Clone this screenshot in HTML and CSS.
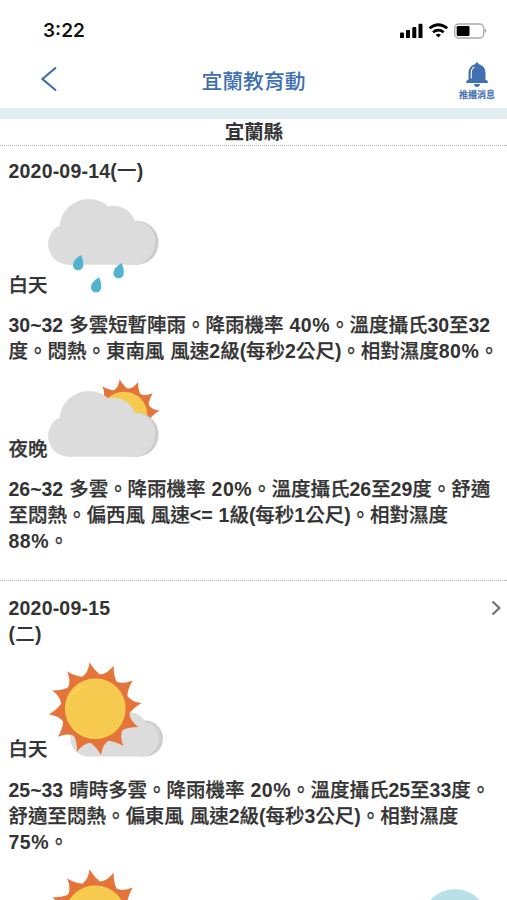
FILE: index.html
```html
<!DOCTYPE html>
<html lang="zh-TW">
<head>
<meta charset="utf-8">
<title>宜蘭教育動</title>
<link rel="stylesheet" href="styles.css">
</head>
<body>
<svg class="defs" aria-hidden="true">
  <defs>
    <symbol id="cloud" viewBox="0 0 112 68" overflow="visible">
      <circle cx="88.700" cy="44.700" r="22" fill="#cecece"/>
      <g fill="#dcdcdc">
        <circle cx="40.900" cy="30.300" r="29.400"/>
        <circle cx="65.500" cy="30.500" r="22.800"/>
        <circle cx="20.800" cy="46" r="20.700"/>
        <path d="M20.800 30H88v36.700H20.800z"/>
        <path d="M85 23H89Q106 26 107 43Q107 60 90 66.700H78z"/>
      </g>
    </symbol>
    <path id="ray" d="M-9 -33.300Q-2.500 -36.500 0 -46.700Q4 -37.500 9 -33.300z"/>
    <g id="sun">
      <g fill="#e4743a">
        <circle r="34.700"/>
        <use href="#ray" transform="rotate(-7)"/><use href="#ray" transform="rotate(23)"/>
        <use href="#ray" transform="rotate(53)"/><use href="#ray" transform="rotate(83)"/>
        <use href="#ray" transform="rotate(113)"/><use href="#ray" transform="rotate(143)"/>
        <use href="#ray" transform="rotate(173)"/><use href="#ray" transform="rotate(203)"/>
        <use href="#ray" transform="rotate(233)"/><use href="#ray" transform="rotate(263)"/>
        <use href="#ray" transform="rotate(293)"/><use href="#ray" transform="rotate(323)"/>
      </g>
      <circle r="30.300" fill="#fcd050"/>
      <path d="M-29 -8C-24 -30 10 -38 25 -17C34 -2 29 18 15 26C-6 36 -30 20 -29 1C-28 -12 -15 -23 0 -24C-15 -25 -25 -17 -29 -8z" fill="#f6c94f"/>
    </g>
    <symbol id="sunny" viewBox="0 0 116 96">
      <circle cx="97" cy="76.500" r="18" fill="#cecece"/>
      <g fill="#dcdcdc">
        <circle cx="80" cy="70" r="20"/>
        <circle cx="40" cy="77" r="17.500"/>
        <path d="M40 60H96Q111 62 111 77Q110 90 97 94.500H40z"/>
      </g>
      <use href="#sun" x="47.300" y="46.700"/>
    </symbol>
  </defs>
</svg>
<div class="screen">
  <header class="status">
    <span class="time">3:22</span>
    <svg class="indicators" viewBox="0 0 88 16" width="88" height="16">
      <path d="M0 10.500q0-1 1-1h2q1 0 1 1V15H0zM6 8q0-1 1-1h2q1 0 1 1v7H6zM12.300 5q0-1 1-1h2q1 0 1 1v10h-4zM18.500 2q0-1.200 1-1.200h2q1 0 1 1.200v13h-4z"/>
      <g fill="none" stroke="#000" stroke-width="2.700"><path d="M29.500 5.300Q38.300-1.800 47.200 5.300M33 9.200q5.300-4.300 10.700 0"/></g>
      <path d="M35.700 11.700q2.600-1.800 5.300 0l-2.650 2.900z"/>
      <rect x="54.700" y="1" width="29" height="14" rx="4" fill="#fff" stroke="#aaa" stroke-width="1.400"/>
      <rect x="56.700" y="3" width="12.800" height="10" rx="1.300"/>
      <path d="M84.800 5.500q3.500 2.300 0 4.600z" fill="#aaa"/>
    </svg>
  </header>
  <nav class="nav">
    <svg class="back" viewBox="0 0 16 26" width="16" height="26"><path d="M15 1.500L1.500 13 15 24.500" fill="none" stroke="#3f6fb0" stroke-width="2.200"/></svg>
    <h1>宜蘭教育動</h1>
    <div class="push">
      <svg viewBox="0 0 24 26" width="24" height="26">
        <path d="M10.500 2q0-1.800 1.500-1.800T13.500 2Q20.500 4 20.500 11v6.500l2.200 1.500q1 2-.7 2H2q-1.700 0-.7-2l2.200-1.500V11q0-7 7-9z" fill="#4170b2"/>
        <path d="M9 22h6q-.5 3-3 3t-3-3z" fill="#4170b2"/>
        <path d="M9.300 5Q6.300 6.500 6.300 11v5.500" fill="none" stroke="#fff" stroke-width="1.100"/>
      </svg>
      <span>推播消息</span>
    </div>
  </nav>
  <div class="band"></div>
  <h2>宜蘭縣</h2>
  <section class="day day-first">
    <h3><b>2020-09-14(</b>一<b>)</b></h3>
    <div class="period rain">
      <span>白天</span>
      <svg viewBox="0 0 116 96" width="116" height="96">
        <use href="#cloud" width="112" height="68"/>
        <g fill="#51b3d0">
          <path id="drop" d="M33.300 57Q35.500 63 35.300 67A5.200 5.200 0 0 1 24.900 67Q25.500 61 33.300 57z"/>
          <use href="#drop" x="40.500" y="8"/><use href="#drop" x="18" y="22.300"/>
        </g>
      </svg>
    </div>
    <p><b>30~32</b> 多雲短暫陣雨。降雨機率 <b class="pct">40%</b>。溫度攝氏<b>30</b>至<b>32</b><br>度。悶熱。東南風 風速<b>2</b>級<b>(</b>每秒<b>2</b>公尺<b>)</b>。相對濕度<b class="pct">80%</b>。</p>
    <div class="period cloudy">
      <span>夜晚</span>
      <svg viewBox="0 0 116 80" width="116" height="80">
        <use href="#sun" transform="translate(76 37) scale(.77)"/>
        <use href="#cloud" y="12" width="112" height="68"/>
      </svg>
    </div>
    <p><b>26~32</b> 多雲。降雨機率 <b class="pct">20%</b>。溫度攝氏<b>26</b>至<b>29</b>度。舒適<br>至悶熱。偏西風 風速<b>&lt;= 1</b>級<b>(</b>每秒<b>1</b>公尺<b>)</b>。相對濕度<br><b class="pct">88%</b>。</p>
  </section>
  <section class="day">
    <div class="day-head">
      <h3><b>2020-09-15</b><br><b>(</b>二<b>)</b></h3>
      <svg viewBox="0 0 10 16" width="10" height="16"><path d="M1.500 1.500L8.300 8l-6.800 6.500" fill="none" stroke="#777" stroke-width="2.400"/></svg>
    </div>
    <div class="period clear">
      <span>白天</span>
      <svg width="116" height="96"><use href="#sunny"/></svg>
    </div>
    <p><b>25~33</b> 晴時多雲。降雨機率 <b class="pct">20%</b>。溫度攝氏<b>25</b>至<b>33</b>度。<br>舒適至悶熱。偏東風 風速<b>2</b>級<b>(</b>每秒<b>3</b>公尺<b>)</b>。相對濕度<br><b class="pct">75%</b>。</p>
    <div class="period clear night">
      <span></span>
      <svg width="116" height="96"><use href="#sunny"/></svg>
    </div>
  </section>
  <div class="fab"></div>
</div>
</body>
</html>
```
FILE: styles.css
```css
* { box-sizing: border-box; margin: 0; padding: 0; }
body { background: #fff; overflow: hidden; }
.defs { position: absolute; width: 0; height: 0; }
.screen {
  position: relative;
  width: 507px;
  height: 900px;
  overflow: hidden;
  font: 500 19.5px/26px "Liberation Sans", "Noto Sans CJK TC", sans-serif;
  color: #333;
}
b { font-weight: bold; -webkit-text-stroke: 0; }
.pct { letter-spacing: .5px; }
svg { display: block; flex: none; }
.status {
  display: flex;
  justify-content: space-between;
  align-items: center;
  height: 62px;
  padding: 0 19px 0 43px;
}
.time { font: 600 19px/24px Inter, sans-serif; color: #111; }
.nav {
  display: grid;
  grid-template-columns: 60px 1fr 60px;
  height: 46px;
}
.back { margin: 4px 0 0 41px; }
.nav h1 {
  font-size: 20.8px;
  font-weight: 500;
  line-height: 40px;
  color: #4170b2;
  text-align: center;
}
.push {
  display: flex;
  flex-direction: column;
  align-items: center;
  font-size: 9px;
  line-height: 14px;
  color: #4170b2;
  -webkit-text-stroke: .25px currentColor;
}
.band { height: 11px; background: #e0eef2; }
h2 {
  height: 27px;
  padding: 1px 0 0 1px;
  border-bottom: 1px dotted #aaa;
  font-size: 19.5px;
  font-weight: bold;
  line-height: 25px;
  text-align: center;
}
h3 { font-size: 19.5px; font-weight: 500; letter-spacing: .2px; }
.day { padding: 14px 8px 0 8.5px; }
.day-first { height: 435px; padding-top: 12px; border-bottom: 1px dotted #aaa; }
.day-head { display: flex; justify-content: space-between; margin-right: -2px; }
.day-head svg { margin-top: 5px; }
.period { display: flex; align-items: flex-end; }
.period span { width: 39.5px; }
.period span, p { -webkit-text-stroke: .25px currentColor; }
.rain { height: 114px; margin-bottom: 14px; }
.rain svg { margin-bottom: 4px; }
.cloudy { height: 94px; margin-bottom: 18px; }
.cloudy span { margin-bottom: -4px; }
.clear { height: 111px; margin-bottom: 19px; }
.clear span { margin-bottom: -4px; }
.night { margin-top: -1px; }
p { white-space: nowrap; word-spacing: .6px; letter-spacing: -.02px; }
.fab {
  position: absolute;
  left: 422px;
  top: 889px;
  width: 66px;
  height: 66px;
  border-radius: 50%;
  background: #b9e0e7;
}
```
